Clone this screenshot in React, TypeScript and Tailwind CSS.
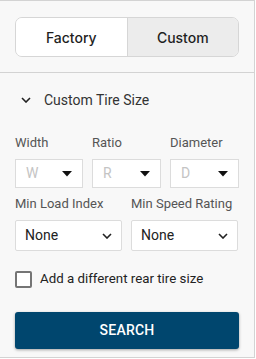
import React from "react";

const Caret = () => (
  <svg width="10" height="6" viewBox="0 0 10 6" className="shrink-0">
    <path d="M0 0h10L5 5.5z" fill="#111" />
  </svg>
);

const Chevron = ({ className = "" }: { className?: string }) => (
  <svg width="10" height="6" viewBox="0 0 10 6" className={"shrink-0 " + className}>
    <path d="M1 1l4 4 4-4" fill="none" stroke="#222" strokeWidth="1.6" />
  </svg>
);

export default function App() {
  return (
    <div className="w-[256px] h-[359px] bg-white" style={{ fontFamily: "Roboto, 'Noto Sans', sans-serif" }}>
      <div className="w-[255px] h-[358px] bg-[#f8f8f8] border-t border-r border-b border-[#d3d3d3] flex flex-col">
        <div className="px-[15px] pt-[16px] pb-[15px] border-b border-[#d3d3d3]">
          <div
            className="flex h-[40px] w-[224px] rounded-[7px] border border-[#d6d6d6] overflow-hidden text-[14px] text-[#1f1f1f] font-medium"
            style={{ fontFamily: "Inter, 'Liberation Sans', sans-serif" }}
          >
            <div className="flex-1 bg-white flex items-center justify-center border-r border-[#d6d6d6]">Factory</div>
            <div className="flex-1 bg-[#ececec] flex items-center justify-center">Custom</div>
          </div>
        </div>
        <div className="px-[15px] pt-[17px]">
          <div className="flex items-center h-[20px] text-[14px] text-[#333]">
            <Chevron className="ml-[6px] mr-[13px]" />
            <span>Custom Tire Size</span>
          </div>
          <div className="flex gap-[9px] mt-[24px] text-[13px] text-[#555]">
            <div className="w-[68px] flex flex-col">
              <span className="h-[18px] leading-[18px]">Width</span>
              <div className="mt-[7px] h-[29px] bg-white border border-[#dcdcdc] flex items-center justify-between pl-[10px] pr-[10px] text-[14px] text-[#c4c4c4]">
                <span>W</span>
                <Caret />
              </div>
            </div>
            <div className="w-[69px] flex flex-col">
              <span className="h-[18px] leading-[18px]">Ratio</span>
              <div className="mt-[7px] h-[29px] bg-white border border-[#dcdcdc] flex items-center justify-between pl-[10px] pr-[10px] text-[14px] text-[#c4c4c4]">
                <span>R</span>
                <Caret />
              </div>
            </div>
            <div className="w-[69px] flex flex-col">
              <span className="h-[18px] leading-[18px]">Diameter</span>
              <div className="mt-[7px] h-[29px] bg-white border border-[#dcdcdc] flex items-center justify-between pl-[10px] pr-[10px] text-[14px] text-[#c4c4c4]">
                <span>D</span>
                <Caret />
              </div>
            </div>
          </div>
          <div className="flex gap-[9px] mt-[7px] text-[13px] text-[#555]">
            <div className="w-[107px] flex flex-col">
              <span className="h-[18px] leading-[18px]">Min Load Index</span>
              <div className="mt-[7px] h-[31px] bg-white border border-[#dcdcdc] rounded-[2px] flex items-center justify-between pl-[9px] pr-[9px] text-[14px] text-[#222]">
                <span>None</span>
                <Chevron />
              </div>
            </div>
            <div className="w-[107px] flex flex-col">
              <span className="h-[18px] leading-[18px]">Min Speed Rating</span>
              <div className="mt-[7px] h-[31px] bg-white border border-[#dcdcdc] rounded-[2px] flex items-center justify-between pl-[9px] pr-[9px] text-[14px] text-[#222]">
                <span>None</span>
                <Chevron />
              </div>
            </div>
          </div>
          <div className="flex items-center mt-[19px] h-[18px]">
            <div className="w-[17px] h-[17px] border-2 border-[#757575] rounded-[2px] bg-white" />
            <span className="ml-[8px] text-[13.3px] text-[#222]">Add a different rear tire size</span>
          </div>
          <button className="mt-[24px] w-[224px] h-[37px] rounded-[3px] bg-[#00466e] text-white text-[14px] font-medium shadow-[0_1px_3px_rgba(0,0,0,0.35)] tracking-[0.2px]">
            SEARCH
          </button>
        </div>
      </div>
    </div>
  );
}
